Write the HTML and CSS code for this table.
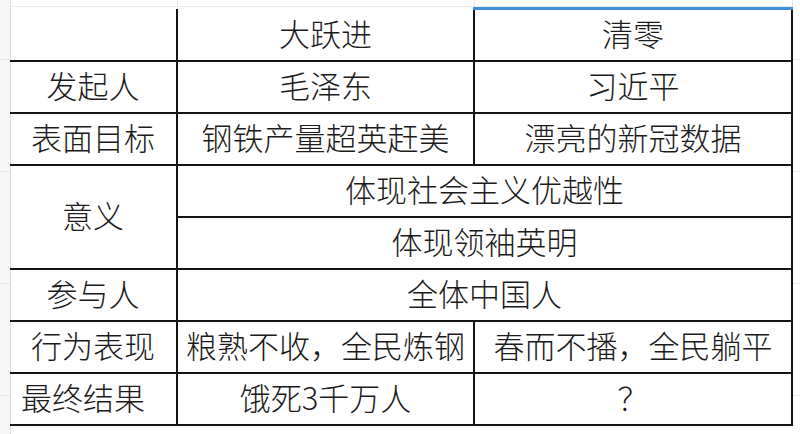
FILE: index.html
```html
<!DOCTYPE html>
<html lang="zh-CN">
<head>
<meta charset="utf-8">
<title>大跃进 vs 清零</title>
<link rel="stylesheet" href="styles.css">
</head>
<body>
<div class="sheet">
  <div class="gutter"></div>
  <div class="content">
    <div class="topstrip">
      <div class="ts c1"></div>
      <div class="ts c2"></div>
      <div class="ts c3"></div>
    </div>
    <table class="grid">
      <colgroup><col class="w1"><col class="w2"><col class="w3"></colgroup>
      <tr class="head"><td></td><td>大跃进</td><td class="sel">清零</td></tr>
      <tr><td>发起人</td><td>毛泽东</td><td>习近平</td></tr>
      <tr><td>表面目标</td><td>钢铁产量超英赶美</td><td>漂亮的新冠数据</td></tr>
      <tr><td rowspan="2">意义</td><td colspan="2">体现社会主义优越性</td></tr>
      <tr><td colspan="2" class="nol">体现领袖英明</td></tr>
      <tr><td>参与人</td><td colspan="2">全体中国人</td></tr>
      <tr><td>行为表现</td><td>粮熟不收，全民炼钢</td><td>春而不播，全民躺平</td></tr>
      <tr><td class="left">最终结果</td><td>饿死3千万人</td><td>？</td></tr>
    </table>
    <div class="bottomstrip"></div>
  </div>
  <div class="rightstrip"></div>
</div>
</body>
</html>
```

FILE: styles.css
```css
* { box-sizing: border-box; }
html, body { margin: 0; padding: 0; background: #fff; }
.sheet {
  width: 800px;
  height: 434px;
  display: flex;
  overflow: hidden;
  background: #fff;
  font-family: "Noto Sans CJK SC", "Noto Sans", sans-serif;
  font-weight: 300;
  color: #1b1b1b;
}
.gutter {
  width: 11px;
  flex: none;
  background-color: #f7f7f7;
  border-right: 1px solid #dedede;
  background-image: repeating-linear-gradient(to bottom, transparent 0, transparent 59px, #e6e6e6 59px, #e6e6e6 60px, transparent 60px, transparent 112px);
}
.content {
  width: 782px;
  flex: none;
  display: flex;
  flex-direction: column;
}
.topstrip {
  height: 7px;
  display: grid;
  grid-template-columns: 167px 297px 318px;
  flex: none;
}
.ts { border-right: 1px solid #e4e4e4; border-bottom: 1px solid #ececec; }
.ts.c1 { margin-left: -1px; }
.grid {
  border-collapse: collapse;
  table-layout: fixed;
  width: 782px;
  border: none;
  margin-left: -1px;
}
.w1 { width: 167px; }
.w2 { width: 297px; }
.w3 { width: 318px; }
.grid td {
  border: 2px solid #141414;
  height: 52px;
  padding: 0 0 3px 0;
  text-align: center;
  vertical-align: middle;
  font-size: 31px;
  line-height: 40px;
  white-space: nowrap;
}
.grid tr > td:first-child { border-left: none; }
.grid td.nol { border-left: none; }
.grid tr.head td { border-top: none; }
.grid tr.head td.sel { border-top: 3px solid #3b8fdc; }
.grid td.left { text-align: left; padding-left: 11px; }
.bottomstrip { flex: 1; }
.rightstrip {
  flex: 1;
  background-image: repeating-linear-gradient(to bottom, transparent 0, transparent 59px, #e8e8e8 59px, #e8e8e8 60px, transparent 60px, transparent 112px);
}
```
